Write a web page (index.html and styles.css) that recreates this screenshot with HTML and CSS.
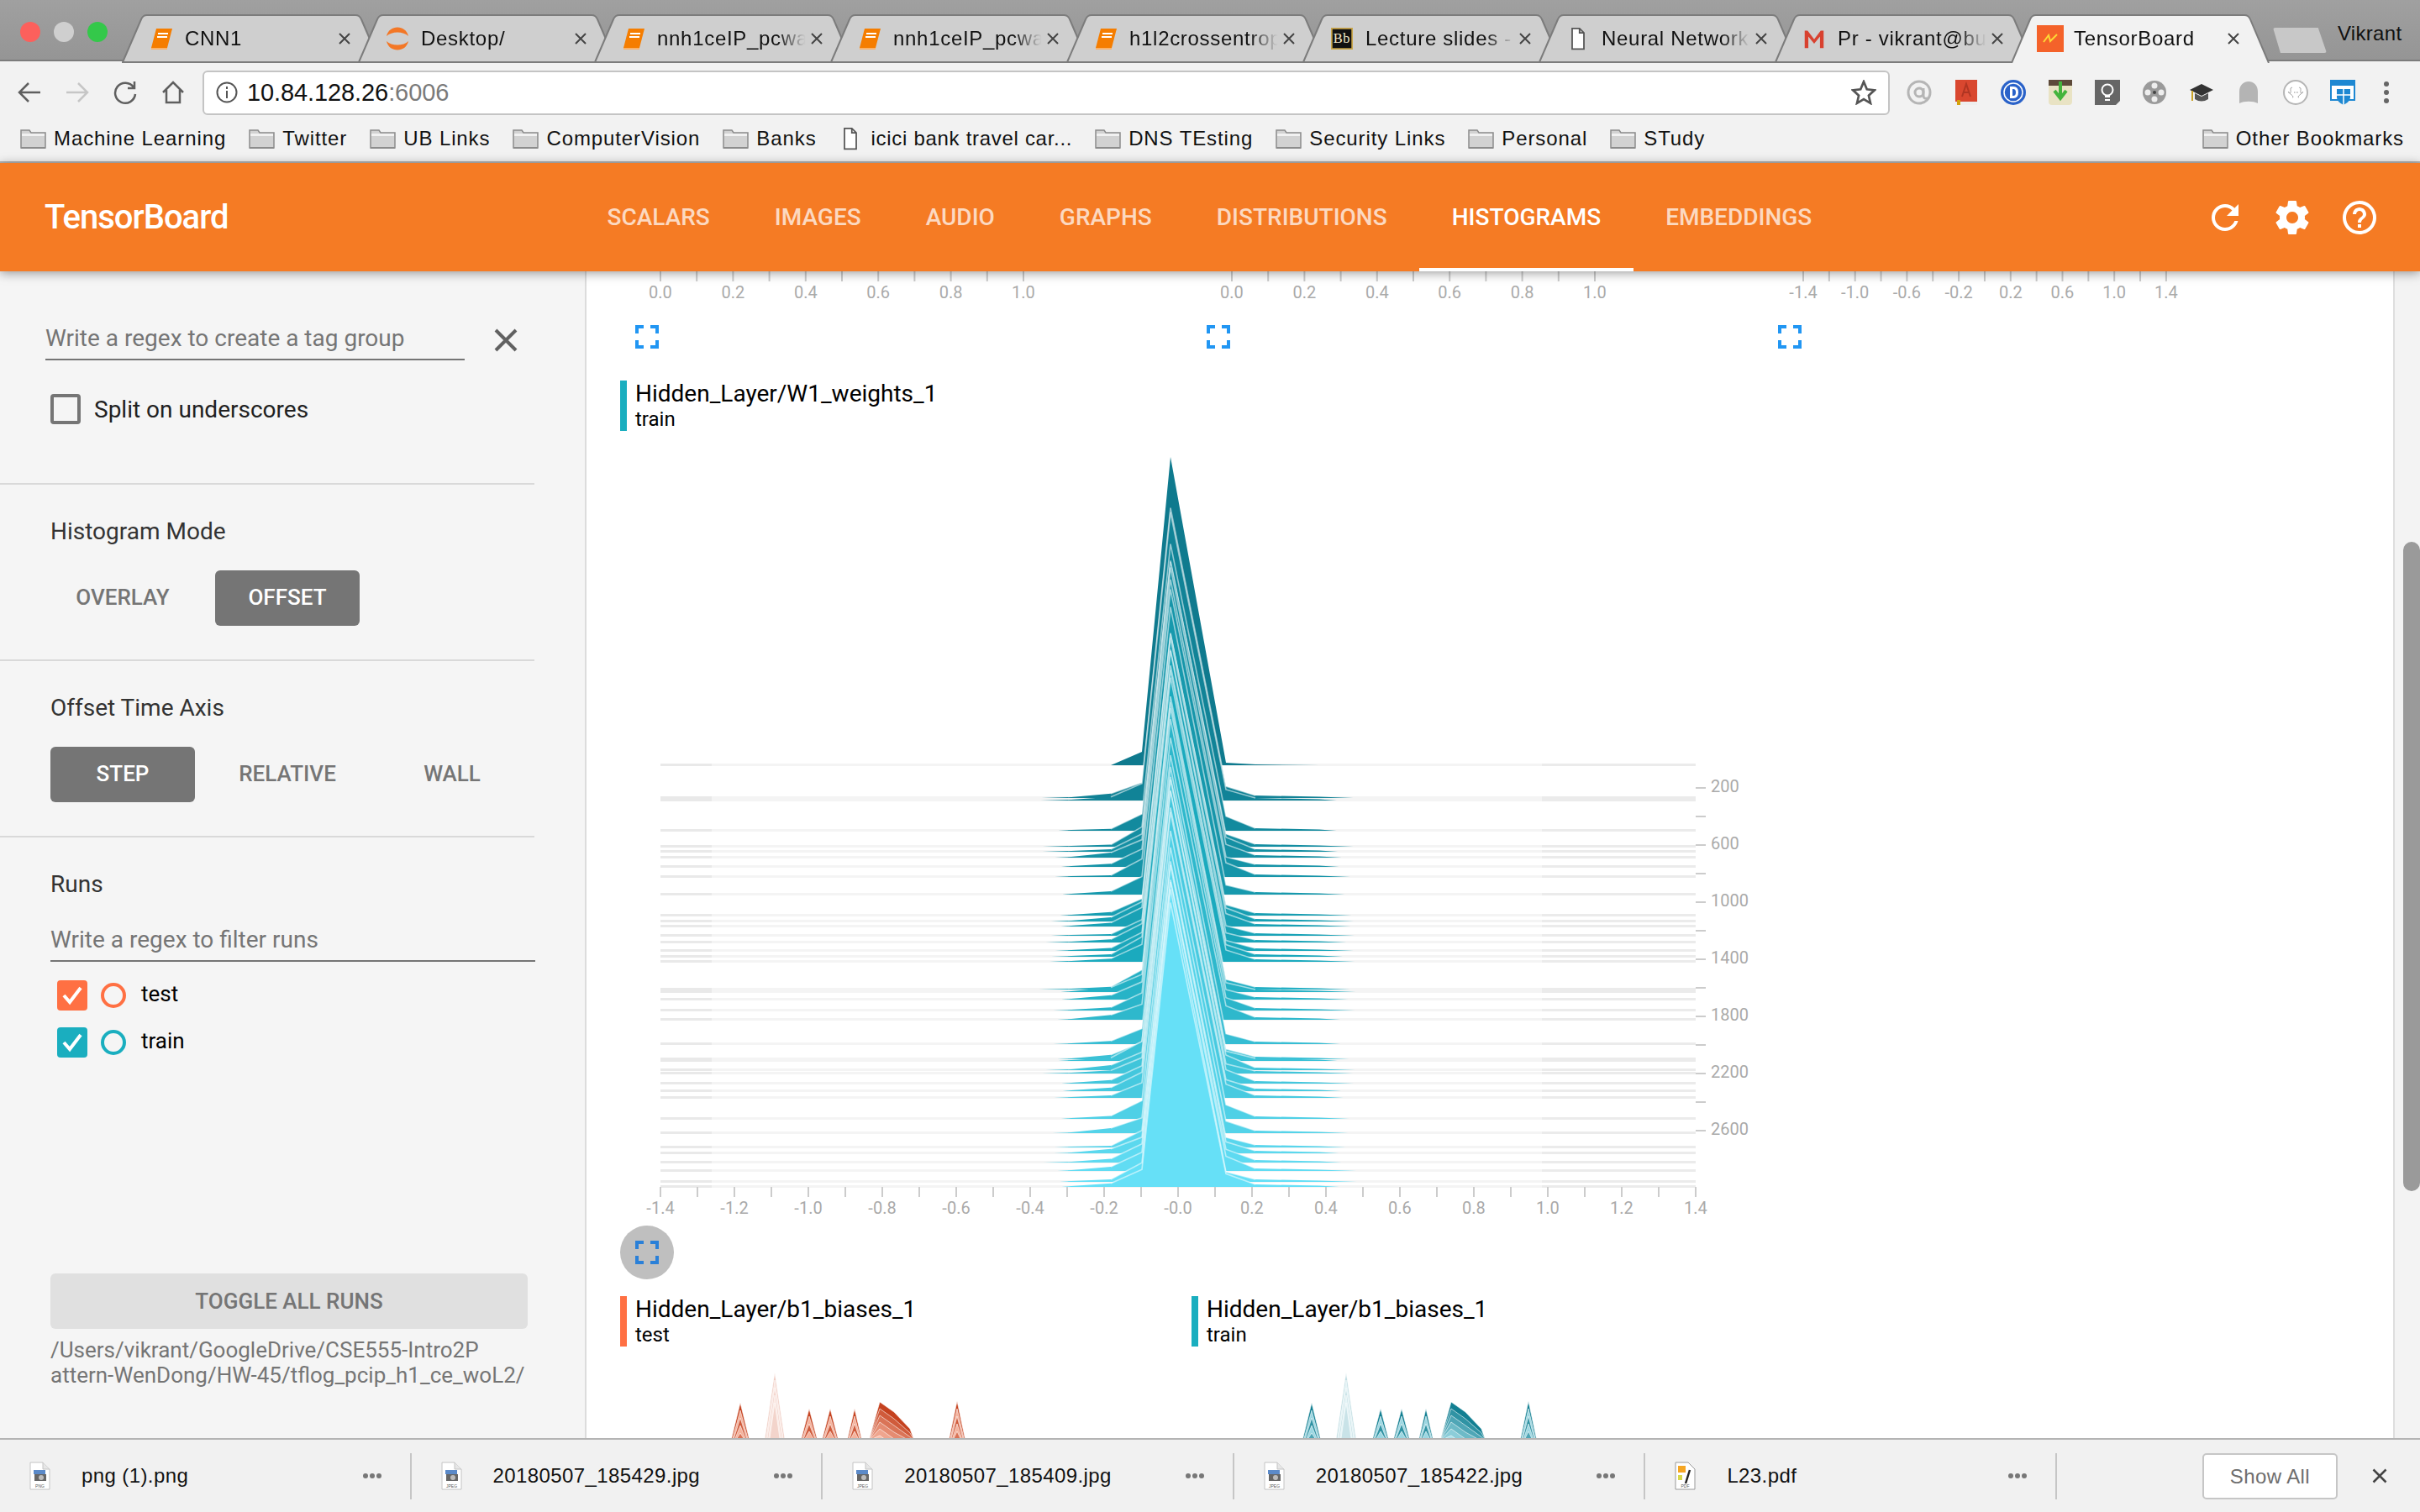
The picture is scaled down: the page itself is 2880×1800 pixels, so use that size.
FILE: index.html
```html
<!DOCTYPE html>
<html lang="en">

<head>
    <meta charset="UTF-8">
    <title>TensorBoard</title>
    <link rel="stylesheet" href="styles.css">
</head>

<body>
    <!-- shared icons -->
    <svg class="defs" width="0" height="0">
        <symbol id="tab-closed" viewBox="0 0 308 58" preserveAspectRatio="none">
            <path d="M1 57L23 6Q25 1 30 1H278Q283 1 285 6L307 57Z" />
        </symbol>
        <symbol id="folder" viewBox="0 0 31 24">
            <path d="M1 23V2H11L13 5H30V23Z" fill="#d2d2d2" stroke="#8c8c8c" stroke-width="1.5" />
            <path d="M2 6H29V9H2Z" fill="#f1f1f1" />
            <path d="M1 22H30V24H1Z" fill="#8c8c8c" />
        </symbol>
        <symbol id="page" viewBox="0 0 20 32">
            <path d="M2 2H12L18 8V30H2ZM12 2V8H18" fill="#fff" stroke="#555" stroke-width="2" />
        </symbol>
        <symbol id="book" viewBox="0 0 26 26">
            <path d="M7 1H26L20 24H1Z" fill="#f57d00" />
            <path d="M1 24H20V26H1Z" fill="#f9b26b" />
            <path d="M9 7H21M8 11H20" stroke="#fff" stroke-width="2" />
        </symbol>
        <symbol id="close-x" viewBox="0 0 16 16">
            <path d="M2 2L14 14M14 2L2 14" stroke="#444" stroke-width="2" fill="none" />
        </symbol>
        <symbol id="expand" viewBox="0 0 28 28">
            <path d="M2 10V2H10M18 2H26V10M26 18V26H18M10 26H2V18" fill="none" stroke="currentColor" stroke-width="4" />
        </symbol>
        <symbol id="doc" viewBox="0 0 25 34">
            <path d="M1 1H16L24 9V33H1Z" fill="#fff" stroke="#c4c4c4" />
            <path d="M16 1V9H24" fill="#e6e6e6" stroke="#c4c4c4" />
            <path d="M5 10H19V15H5Z" fill="#5b8ac9" />
            <path d="M6 15H20V23H6Z" fill="#666" />
            <circle cx="14" cy="19" r="3" fill="#bbb" />
        </symbol>
        <symbol id="check" viewBox="0 0 36 36">
            <path d="M8 18L15 26L28 9" fill="none" stroke="#fff" stroke-width="4" />
        </symbol>
    </svg>

    <header class="tabstrip">
        <div class="lights">
            <span class="light light-red"></span>
            <span class="light light-off"></span>
            <span class="light light-green"></span>
        </div>
        <div class="tabs">
            <div class="tab">
                <svg class="tab-shape"><use href="#tab-closed" /></svg>
                <svg class="favicon"><use href="#book" /></svg>
                <span class="tab-title">CNN1</span>
                <svg class="tab-x"><use href="#close-x" /></svg>
            </div>
            <div class="tab">
                <svg class="tab-shape"><use href="#tab-closed" /></svg>
                <svg class="favicon favicon-wide" viewBox="0 0 30 30">
                    <path d="M2 12C5 -2 25 -2 28 12C22 6 8 6 2 12Z" fill="#f37726" />
                    <path d="M2 18C5 32 25 32 28 18C22 24 8 24 2 18Z" fill="#f37726" />
                </svg>
                <span class="tab-title">Desktop/</span>
                <svg class="tab-x"><use href="#close-x" /></svg>
            </div>
            <div class="tab">
                <svg class="tab-shape"><use href="#tab-closed" /></svg>
                <svg class="favicon"><use href="#book" /></svg>
                <span class="tab-title">nnh1ceIP_pcwa</span>
                <svg class="tab-x"><use href="#close-x" /></svg>
            </div>
            <div class="tab">
                <svg class="tab-shape"><use href="#tab-closed" /></svg>
                <svg class="favicon"><use href="#book" /></svg>
                <span class="tab-title">nnh1ceIP_pcwa</span>
                <svg class="tab-x"><use href="#close-x" /></svg>
            </div>
            <div class="tab">
                <svg class="tab-shape"><use href="#tab-closed" /></svg>
                <svg class="favicon"><use href="#book" /></svg>
                <span class="tab-title">h1l2crossentrop</span>
                <svg class="tab-x"><use href="#close-x" /></svg>
            </div>
            <div class="tab">
                <svg class="tab-shape"><use href="#tab-closed" /></svg>
                <svg class="favicon" viewBox="0 0 30 30">
                    <rect x="1" y="1" width="28" height="28" fill="#111" stroke="#c9a64a" stroke-width="2" />
                    <text x="15" y="21" class="bb-text">Bb</text>
                </svg>
                <span class="tab-title">Lecture slides -</span>
                <svg class="tab-x"><use href="#close-x" /></svg>
            </div>
            <div class="tab">
                <svg class="tab-shape"><use href="#tab-closed" /></svg>
                <svg class="favicon"><use href="#page" /></svg>
                <span class="tab-title">Neural Network</span>
                <svg class="tab-x"><use href="#close-x" /></svg>
            </div>
            <div class="tab">
                <svg class="tab-shape"><use href="#tab-closed" /></svg>
                <svg class="favicon" viewBox="0 0 30 30">
                    <path d="M2 4H6L15 16L24 4H28V28H23V12L15 22L7 12V28H2Z" fill="#d8412f" />
                </svg>
                <span class="tab-title">Pr - vikrant@bu</span>
                <svg class="tab-x"><use href="#close-x" /></svg>
            </div>
            <div class="tab tab-active">
                <svg class="tab-shape" viewBox="0 0 308 58" preserveAspectRatio="none">
                    <path d="M1 58L23 6Q25 1 30 1H278Q283 1 285 6L307 58" />
                </svg>
                <svg class="favicon favicon-tb" viewBox="0 0 32 32">
                    <rect width="32" height="32" fill="#f4622a" />
                    <path d="M8 20L14 12L16 19L24 11" fill="none" stroke="#fdd835" stroke-width="2" />
                </svg>
                <span class="tab-title">TensorBoard</span>
                <svg class="tab-x"><use href="#close-x" /></svg>
            </div>
        </div>
        <div class="new-tab"></div>
        <span class="profile">Vikrant</span>
    </header>

    <div class="toolbar">
        <div class="nav-row">
            <svg class="nav-btn" viewBox="0 0 30 30"><path d="M28 15H4M14 4L3 15L14 26" /></svg>
            <svg class="nav-btn nav-off" viewBox="0 0 30 30"><path d="M2 15H26M16 4L27 15L16 26" /></svg>
            <svg class="nav-btn" viewBox="0 0 30 30"><path d="M25 9A12 12 0 1 0 27 17M26 2V10H18" /></svg>
            <svg class="nav-btn" viewBox="0 0 30 30"><path d="M3 15L15 3L27 15M7 12V27H23V12" /></svg>
            <div class="omnibox">
                <svg class="omni-info" viewBox="0 0 26 26">
                    <circle cx="13" cy="13" r="11.5" />
                    <path d="M13 11V20M13 6V9" />
                </svg>
                <span class="omni-host">10.84.128.26</span><span class="omni-port">:6006</span>
                <svg class="omni-star" viewBox="0 0 28 28"><path d="M14 2L17.5 10.5L26 11.5L19.5 17.5L21.5 26L14 21.5L6.5 26L8.5 17.5L2 11.5L10.5 10.5Z" /></svg>
            </div>
            <div class="extensions">
                <svg class="ext" viewBox="0 0 30 30">
                    <circle cx="15" cy="15" r="13" fill="none" stroke="#b5b5b5" stroke-width="3" />
                    <circle cx="15" cy="15" r="5" fill="none" stroke="#b5b5b5" stroke-width="3" />
                    <path d="M20 10V19Q20 23 25 22" fill="none" stroke="#b5b5b5" stroke-width="3" />
                </svg>
                <svg class="ext" viewBox="0 0 30 30">
                    <rect x="2" y="0" width="26" height="26" fill="#d9472f" />
                    <rect x="2" y="26" width="26" height="4" fill="#eee" />
                    <path d="M10 20L15 5L20 20M12 15H18" fill="none" stroke="#b03522" stroke-width="2" />
                    <rect x="4" y="24" width="4" height="6" fill="#d4a20c" />
                </svg>
                <svg class="ext" viewBox="0 0 30 30">
                    <circle cx="15" cy="15" r="15" fill="#2a62c9" />
                    <circle cx="15" cy="15" r="11" fill="none" stroke="#fff" stroke-width="1.5" />
                    <path d="M11 8H15Q21 8 21 15T15 22H11Z" fill="#fff" />
                    <path d="M14 11H15Q18 11 18 15T15 19H14Z" fill="#2a62c9" />
                </svg>
                <svg class="ext" viewBox="0 0 30 30">
                    <rect x="1" y="0" width="28" height="30" rx="4" fill="#e9e3c4" />
                    <rect x="1" y="0" width="28" height="7" fill="#5d4a3a" />
                    <path d="M15 2V20M8 13L15 22L22 13" fill="none" stroke="#44b43c" stroke-width="4" />
                </svg>
                <svg class="ext" viewBox="0 0 30 30">
                    <path d="M0 0H30V25L25 30H0Z" fill="#666" />
                    <circle cx="15" cy="12" r="6.5" fill="none" stroke="#fff" stroke-width="2" />
                    <path d="M12 20H18M12 24H18" stroke="#fff" stroke-width="2" />
                </svg>
                <svg class="ext" viewBox="0 0 30 30">
                    <circle cx="15" cy="15" r="14" fill="#9a9a9a" />
                    <circle cx="15" cy="7" r="3.5" fill="#eee" />
                    <circle cx="15" cy="23" r="3.5" fill="#eee" />
                    <circle cx="7" cy="15" r="3.5" fill="#eee" />
                    <circle cx="23" cy="15" r="3.5" fill="#eee" />
                    <circle cx="15" cy="15" r="2" fill="#444" />
                </svg>
                <svg class="ext" viewBox="0 0 30 30">
                    <path d="M15 5L29 12L15 19L1 12Z" fill="#333" />
                    <path d="M7 16V23Q15 28 23 23V16L15 20Z" fill="#555" />
                    <path d="M4 13V25" stroke="#c9a227" stroke-width="2" />
                </svg>
                <svg class="ext" viewBox="0 0 30 30">
                    <path d="M4 28V14C4 -2 26 -2 26 14V28C20 25 10 25 4 28Z" fill="#b4b4b4" />
                </svg>
                <svg class="ext" viewBox="0 0 30 30">
                    <circle cx="15" cy="15" r="14" fill="#fff" stroke="#b5b5b5" stroke-width="2" />
                    <path d="M11 9Q8 9 9 13T7 15T9 17T11 21M19 9Q22 9 21 13T23 15T21 17T19 21" fill="none" stroke="#aaa" />
                    <path d="M13 15H14M15 15H16M17 15H18" stroke="#888" />
                </svg>
                <svg class="ext" viewBox="0 0 30 30">
                    <path d="M1 1H29V24H1Z" fill="#fff" stroke="#1e88d2" stroke-width="2" />
                    <rect x="1" y="1" width="28" height="6" fill="#1e88d2" />
                    <path d="M8 11H24V21Q24 26 16 30Q8 26 8 21Z" fill="#1e88d2" />
                    <path d="M16 11V30M8 18H24" stroke="#fff" stroke-width="1.5" />
                </svg>
                <svg class="ext ext-menu" viewBox="0 0 8 30">
                    <circle cx="4" cy="5" r="3" />
                    <circle cx="4" cy="15" r="3" />
                    <circle cx="4" cy="25" r="3" />
                </svg>
            </div>
        </div>

        <nav class="bookmarks">
            <a class="bookmark"><svg class="bm-icon"><use href="#folder" /></svg>Machine Learning</a>
            <a class="bookmark"><svg class="bm-icon"><use href="#folder" /></svg>Twitter</a>
            <a class="bookmark"><svg class="bm-icon"><use href="#folder" /></svg>UB Links</a>
            <a class="bookmark"><svg class="bm-icon"><use href="#folder" /></svg>ComputerVision</a>
            <a class="bookmark"><svg class="bm-icon"><use href="#folder" /></svg>Banks</a>
            <a class="bookmark bookmark-page"><svg class="bm-page"><use href="#page" /></svg>icici bank travel car...</a>
            <a class="bookmark"><svg class="bm-icon"><use href="#folder" /></svg>DNS TEsting</a>
            <a class="bookmark"><svg class="bm-icon"><use href="#folder" /></svg>Security Links</a>
            <a class="bookmark"><svg class="bm-icon"><use href="#folder" /></svg>Personal</a>
            <a class="bookmark"><svg class="bm-icon"><use href="#folder" /></svg>STudy</a>
            <a class="bookmark bookmark-other"><svg class="bm-icon"><use href="#folder" /></svg>Other Bookmarks</a>
        </nav>
    </div>

    <div class="tb-header">
        <div class="tb-brand">TensorBoard</div>
        <nav class="tb-tabs">
            <a class="tb-tab">Scalars</a>
            <a class="tb-tab">Images</a>
            <a class="tb-tab">Audio</a>
            <a class="tb-tab">Graphs</a>
            <a class="tb-tab">Distributions</a>
            <a class="tb-tab tb-tab-active">Histograms</a>
            <a class="tb-tab">Embeddings</a>
        </nav>
        <div class="tb-actions">
            <svg class="tb-icon" viewBox="0 0 24 24"><path d="M17.65 6.35C16.2 4.9 14.21 4 12 4c-4.42 0-7.99 3.58-7.99 8s3.57 8 7.99 8c3.73 0 6.84-2.55 7.73-6h-2.08c-.82 2.33-3.04 4-5.65 4-3.31 0-6-2.69-6-6s2.69-6 6-6c1.66 0 3.14.69 4.22 1.78L13 11h7V4l-2.35 2.35z" /></svg>
            <svg class="tb-icon" viewBox="0 0 24 24"><path d="M19.43 12.98c.04-.32.07-.64.07-.98s-.03-.66-.07-.98l2.11-1.65c.19-.15.24-.42.12-.64l-2-3.46c-.12-.22-.39-.3-.61-.22l-2.49 1c-.52-.4-1.08-.73-1.69-.98l-.38-2.65C14.46 2.18 14.25 2 14 2h-4c-.25 0-.46.18-.49.42l-.38 2.65c-.61.25-1.17.59-1.69.98l-2.49-1c-.23-.09-.49 0-.61.22l-2 3.46c-.13.22-.07.49.12.64l2.11 1.65c-.04.32-.07.65-.07.98s.03.66.07.98l-2.11 1.65c-.19.15-.24.42-.12.64l2 3.46c.12.22.39.3.61.22l2.49-1c.52.4 1.08.73 1.69.98l.38 2.65c.03.24.24.42.49.42h4c.25 0 .46-.18.49-.42l.38-2.65c.61-.25 1.17-.59 1.69-.98l2.49 1c.23.09.49 0 .61-.22l2-3.46c.12-.22.07-.49-.12-.64l-2.11-1.65zM12 15.5c-1.93 0-3.5-1.57-3.5-3.5s1.57-3.5 3.5-3.5 3.5 1.57 3.5 3.5-1.57 3.5-3.5 3.5z" /></svg>
            <svg class="tb-icon" viewBox="0 0 24 24"><path d="M11 18h2v-2h-2v2zm1-16C6.48 2 2 6.48 2 12s4.48 10 10 10 10-4.48 10-10S17.52 2 12 2zm0 18c-4.41 0-8-3.59-8-8s3.59-8 8-8 8 3.59 8 8-3.59 8-8 8zm0-14c-2.21 0-4 1.79-4 4h2c0-1.1.9-2 2-2s2 .9 2 2c0 2-3 1.75-3 5h2c0-2.25 3-2.5 3-5 0-2.21-1.79-4-4-4z" /></svg>
        </div>
    </div>

    <div class="content">
        <aside class="sidebar">
            <section class="side-section side-tags">
                <div class="tag-row">
                    <div class="side-input side-input-tag">Write a regex to create a tag group</div>
                    <svg class="tag-clear" viewBox="0 0 28 28"><path d="M2 2L26 26M26 2L2 26" /></svg>
                </div>
                <label class="split-row"><span class="split-box"></span>Split on underscores</label>
            </section>
            <section class="side-section">
                <h3 class="side-title">Histogram Mode</h3>
                <div class="seg">
                    <span class="seg-btn">Overlay</span>
                    <span class="seg-btn seg-btn-on">Offset</span>
                </div>
            </section>
            <section class="side-section">
                <h3 class="side-title">Offset Time Axis</h3>
                <div class="seg">
                    <span class="seg-btn seg-btn-on">Step</span>
                    <span class="seg-btn">Relative</span>
                    <span class="seg-btn">Wall</span>
                </div>
            </section>
            <section class="side-section side-runs">
                <h3 class="side-title">Runs</h3>
                <div class="side-input side-input-runs">Write a regex to filter runs</div>
                <div class="run-row run-test">
                    <span class="run-check"><svg><use href="#check" /></svg></span>
                    <span class="run-dot"></span>
                    <span class="run-name">test</span>
                </div>
                <div class="run-row run-train">
                    <span class="run-check"><svg><use href="#check" /></svg></span>
                    <span class="run-dot"></span>
                    <span class="run-name">train</span>
                </div>
            </section>
            <div class="side-foot">
                <div class="toggle-btn">Toggle all runs</div>
                <p class="logdir">/Users/vikrant/GoogleDrive/CSE555-Intro2P<br>attern-WenDong/HW-45/tflog_pcip_h1_ce_woL2/</p>
            </div>
        </aside>

        <main class="cards">
            <div class="card">
                <svg class="axis-top" id="axis-1" viewBox="0 0 680 46"></svg>
                <div class="expand-btn"><svg class="expand-icon"><use href="#expand" /></svg></div>
            </div>
            <div class="card">
                <svg class="axis-top" id="axis-2" viewBox="0 0 680 46"></svg>
                <div class="expand-btn"><svg class="expand-icon"><use href="#expand" /></svg></div>
            </div>
            <div class="card">
                <svg class="axis-top" id="axis-3" viewBox="0 0 680 46"></svg>
                <div class="expand-btn"><svg class="expand-icon"><use href="#expand" /></svg></div>
            </div>

            <div class="card card-wide">
                <div class="card-head head-train">
                    <div class="card-tag">Hidden_Layer/W1_weights_1</div>
                    <div class="card-run">train</div>
                </div>
                <svg class="hist-big" id="hist-big" viewBox="738 512 1360 946"></svg>
                <div class="expand-btn expand-btn-hover"><svg class="expand-icon"><use href="#expand" /></svg></div>
            </div>
            <div class="card-spacer"></div>

            <div class="card">
                <div class="card-head head-test">
                    <div class="card-tag">Hidden_Layer/b1_biases_1</div>
                    <div class="card-run">test</div>
                </div>
                <svg class="hist-small" id="hist-test" viewBox="738 1602 680 110"></svg>
            </div>
            <div class="card">
                <div class="card-head head-train">
                    <div class="card-tag">Hidden_Layer/b1_biases_1</div>
                    <div class="card-run">train</div>
                </div>
                <svg class="hist-small" id="hist-train" viewBox="738 1602 680 110"></svg>
            </div>
        </main>

        <div class="scrollbar"><div class="scroll-thumb"></div></div>
    </div>

    <footer class="shelf">
        <div class="dl-item">
            <svg class="dl-icon" viewBox="0 0 25 34"><use href="#doc" /><text x="12.5" y="31" class="dl-type">PNG</text></svg>
            <span class="dl-name">png (1).png</span>
            <span class="dl-more"><i></i><i></i><i></i></span>
        </div>
        <div class="dl-item">
            <svg class="dl-icon" viewBox="0 0 25 34"><use href="#doc" /><text x="12.5" y="31" class="dl-type">JPEG</text></svg>
            <span class="dl-name">20180507_185429.jpg</span>
            <span class="dl-more"><i></i><i></i><i></i></span>
        </div>
        <div class="dl-item">
            <svg class="dl-icon" viewBox="0 0 25 34"><use href="#doc" /><text x="12.5" y="31" class="dl-type">JPEG</text></svg>
            <span class="dl-name">20180507_185409.jpg</span>
            <span class="dl-more"><i></i><i></i><i></i></span>
        </div>
        <div class="dl-item">
            <svg class="dl-icon" viewBox="0 0 25 34"><use href="#doc" /><text x="12.5" y="31" class="dl-type">JPEG</text></svg>
            <span class="dl-name">20180507_185422.jpg</span>
            <span class="dl-more"><i></i><i></i><i></i></span>
        </div>
        <div class="dl-item">
            <svg class="dl-icon" viewBox="0 0 25 34">
                <path d="M1 1H16L24 9V33H1Z" fill="#fff" stroke="#999" />
                <path d="M4 5H13V13H4Z" fill="#f5a623" />
                <path d="M4 16H9V22H4Z" fill="#d8d84a" />
                <path d="M18 10L13 26" stroke="#222" stroke-width="2.5" />
                <text x="12.5" y="31" class="dl-type">PDF</text>
            </svg>
            <span class="dl-name">L23.pdf</span>
            <span class="dl-more"><i></i><i></i><i></i></span>
        </div>
        <div class="shelf-show">Show All</div>
        <svg class="shelf-x"><use href="#close-x" /></svg>
    </footer>

    <script src="script.js"></script>
</body>

</html>
```

FILE: styles.css
```css
* {
    box-sizing: border-box;
}

html,
body {
    margin: 0;
    height: 1800px;
    overflow: hidden;
}

body {
    display: flex;
    flex-direction: column;
    width: 2880px;
    font-family: "Roboto", "Liberation Sans", sans-serif;
    background-color: #fff;
}

.defs {
    position: absolute;
}

/* browser tab strip */
.tabstrip {
    display: flex;
    flex: none;
    height: 73px;
    background: linear-gradient(#a0a0a0, #959595);
    border-bottom: 2px solid #7c7c7c;
    font-family: "Liberation Sans", sans-serif;
}

.lights {
    display: flex;
    gap: 16px;
    width: 145px;
    padding: 26px 0 0 24px;
}

.light {
    width: 24px;
    height: 24px;
    border-radius: 50%;
}

.light-red {
    background-color: #fc605c;
}

.light-off {
    background-color: #cfcfcf;
}

.light-green {
    background-color: #34c84a;
}

.tabs {
    display: flex;
    align-items: flex-end;
}

.tab {
    position: relative;
    display: flex;
    align-items: center;
    width: 308px;
    height: 56px;
    margin-right: -27px;
    margin-bottom: -2px;
    padding: 2px 0 0 34px;
    font-size: 24px;
    letter-spacing: 0.7px;
    color: #111;
}

.tab-shape {
    position: absolute;
    top: 0;
    left: 0;
    width: 308px;
    height: 58px;
    fill: #cfcfcf;
    stroke: #7c7c7c;
    stroke-width: 2px;
}

.tab-active {
    z-index: 2;
}

.tab-active .tab-shape {
    fill: #f2f2f2;
}

.favicon {
    position: relative;
    flex: none;
    width: 26px;
    height: 28px;
}

.favicon-wide {
    width: 30px;
    height: 30px;
    margin: 0 -2px;
}

.favicon-tb {
    width: 32px;
    height: 32px;
    margin: 0 -3px;
}

.bb-text {
    font-family: "Liberation Serif", serif;
    font-size: 19px;
    fill: #f0e6c8;
    text-anchor: middle;
}

.tab-title {
    position: relative;
    width: 184px;
    margin-left: 15px;
    overflow: hidden;
    white-space: nowrap;
    -webkit-mask-image: linear-gradient(to right, #000 78%, transparent 96%);
    mask-image: linear-gradient(to right, #000 78%, transparent 96%);
}

.tab-x {
    position: relative;
    width: 16px;
    height: 16px;
    margin-left: -2px;
}

.new-tab {
    width: 64px;
    height: 30px;
    margin: 33px 0 0 31px;
    background-color: #c8c8c8;
    clip-path: polygon(0 0, 84% 0, 100% 100%, 14% 100%);
    border-radius: 3px;
}

.profile {
    margin: 26px 0 0 13px;
    font-size: 24px;
    line-height: 28px;
    letter-spacing: 0.3px;
    color: #111;
}

/* address bar + bookmarks */
.toolbar {
    flex: none;
    height: 121px;
    background-color: #f2f2f2;
    border-bottom: 2px solid #b4b4b4;
    font-family: "Liberation Sans", sans-serif;
}

.nav-row {
    display: flex;
    align-items: center;
    height: 64px;
    padding: 10px 0 0 20px;
}

.nav-btn {
    flex: none;
    width: 30px;
    height: 30px;
    margin-right: 27px;
    fill: none;
    stroke: #5f5f5f;
    stroke-width: 2.5;
}

.nav-off {
    stroke: #c6c6c6;
}

.omnibox {
    display: flex;
    align-items: center;
    width: 2008px;
    height: 53px;
    margin-left: -7px;
    padding: 0 14px;
    background-color: #fff;
    border: 2px solid #c4c4c4;
    border-radius: 6px;
    font-size: 29px;
    letter-spacing: -0.1px;
}

.omni-info {
    width: 26px;
    height: 26px;
    margin-right: 11px;
    fill: none;
    stroke: #555;
    stroke-width: 2;
}

.omni-host {
    color: #111;
}

.omni-port {
    color: #7a7a7a;
}

.omni-star {
    width: 30px;
    height: 30px;
    margin-left: auto;
    fill: none;
    stroke: #555;
    stroke-width: 2.5;
}

.extensions {
    display: flex;
    align-items: center;
    gap: 26px;
    margin-left: 20px;
}

.ext {
    flex: none;
    width: 30px;
    height: 30px;
}

.ext-menu {
    width: 8px;
    margin-left: 7px;
    fill: #666;
}

.bookmarks {
    display: flex;
    align-items: center;
    gap: 27px;
    height: 55px;
    padding: 0 19px 0 24px;
    font-size: 24px;
    letter-spacing: 0.9px;
    color: #111;
}

.bookmark {
    display: flex;
    align-items: center;
    gap: 9px;
}

.bookmark-page {
    letter-spacing: 0.7px;
}

.bookmark-other {
    margin-left: auto;
}

.bm-icon {
    width: 31px;
    height: 24px;
}

.bm-page {
    width: 20px;
    height: 28px;
    margin: 0 6px 0 3px;
}

/* tensorboard header */
.tb-header {
    position: relative;
    z-index: 3;
    display: flex;
    align-items: stretch;
    flex: none;
    height: 129px;
    padding: 0 48px 0 53px;
    background-color: #f57b24;
    color: #fff;
    box-shadow: 0 2px 12px rgba(0, 0, 0, 0.4);
}

.tb-brand {
    width: 631px;
    font-size: 40px;
    font-weight: 500;
    line-height: 129px;
    letter-spacing: -1px;
}

.tb-tabs {
    display: flex;
}

.tb-tab {
    padding: 0 38.5px;
    font-size: 28px;
    font-weight: 500;
    line-height: 129px;
    text-transform: uppercase;
    color: rgba(255, 255, 255, 0.72);
}

.tb-tab-active {
    color: #fff;
    border-bottom: 4px solid #fff;
}

.tb-actions {
    display: flex;
    align-items: center;
    gap: 32px;
    margin-left: auto;
}

.tb-icon {
    width: 48px;
    height: 48px;
    fill: #fff;
}

/* layout under the header */
.content {
    display: flex;
    flex: 1;
    min-height: 0;
}

.sidebar {
    display: flex;
    flex-direction: column;
    flex: none;
    width: 698px;
    background-color: #f5f5f5;
    border-right: 2px solid #dcdcdc;
}

.side-section {
    width: 636px;
    height: 210px;
    padding: 36px 0 0 60px;
    border-bottom: 2px solid #d9d9d9;
}

.side-tags {
    height: 254px;
    padding: 62px 0 0 54px;
}

.side-runs {
    height: auto;
    border-bottom: none;
}

.tag-row {
    display: flex;
}

.side-input {
    height: 44px;
    font-size: 28px;
    line-height: 36px;
    color: #757575;
    border-bottom: 2px solid #757575;
}

.side-input-tag {
    width: 499px;
}

.tag-clear {
    width: 28px;
    height: 28px;
    margin: 6px 0 0 35px;
    fill: none;
    stroke: #616161;
    stroke-width: 4;
}

.split-row {
    display: flex;
    align-items: center;
    gap: 16px;
    margin: 40px 0 0 6px;
    font-size: 28px;
    color: #212121;
}

.split-box {
    width: 36px;
    height: 36px;
    border: 4px solid #757575;
    border-radius: 4px;
}

.side-title {
    margin: 0;
    font-size: 28px;
    font-weight: 400;
    line-height: 40px;
    color: #333;
}

.seg {
    display: flex;
    gap: 24px;
    margin-top: 26px;
}

.seg-btn {
    width: 172px;
    height: 66px;
    font-size: 26px;
    font-weight: 500;
    line-height: 65px;
    text-align: center;
    text-transform: uppercase;
    color: #757575;
    border-radius: 6px;
}

.seg-btn-on {
    background-color: #757575;
    color: #fff;
}

.side-input-runs {
    width: 577px;
    margin-top: 26px;
    height: 46px;
    line-height: 40px;
}

.run-row {
    display: flex;
    align-items: center;
    height: 36px;
    margin: 22px 0 0 8px;
    font-size: 26px;
    color: #000;
}

.run-row + .run-row {
    margin-top: 20px;
}

.run-check {
    width: 36px;
    height: 36px;
    border-radius: 4px;
}

.run-check svg {
    display: block;
    width: 36px;
    height: 36px;
}

.run-dot {
    width: 30px;
    height: 30px;
    margin: 0 18px 0 16px;
    border: 4px solid;
    border-radius: 50%;
}

.run-name {
    margin-bottom: 5px;
}

.run-test .run-check {
    background-color: #ff7043;
}

.run-test .run-dot {
    border-color: #ff7043;
}

.run-train .run-check {
    background-color: #1aaebf;
}

.run-train .run-dot {
    border-color: #1aaebf;
}

.side-foot {
    margin-top: auto;
    padding: 0 0 60px 60px;
}

.toggle-btn {
    width: 568px;
    height: 66px;
    background-color: #e0e0e0;
    border-radius: 6px;
    font-size: 26px;
    font-weight: 500;
    line-height: 66px;
    text-align: center;
    text-transform: uppercase;
    color: #757575;
}

.logdir {
    margin: 10px 0 0;
    font-size: 26px;
    line-height: 30px;
    color: #757575;
    white-space: nowrap;
}

/* chart cards */
.cards {
    display: grid;
    flex: 1;
    grid-template-columns: repeat(3, 680px);
    grid-auto-rows: min-content;
    align-content: start;
    padding-left: 40px;
    overflow: hidden;
    min-width: 0;
}

.card-wide {
    grid-column: span 2;
}

.axis-top {
    display: block;
    width: 680px;
    height: 46px;
}

.axis-line {
    stroke: #ccc;
    stroke-width: 2;
}

.axis-label {
    font-family: "Roboto", sans-serif;
    font-size: 20px;
    fill: #aaa;
    text-anchor: middle;
    dominant-baseline: central;
}

.axis-label-y {
    text-anchor: start;
}

.expand-btn {
    display: flex;
    align-items: center;
    justify-content: center;
    width: 64px;
    height: 64px;
    color: #2196f3;
    border-radius: 50%;
}

.expand-btn-hover {
    background-color: #bfbfbf;
    color: #2a80d8;
}

.expand-icon {
    width: 28px;
    height: 28px;
}

.card-head {
    height: 60px;
    margin-top: 20px;
    padding-left: 10px;
    border-left: 8px solid;
    color: #000;
}

.head-train {
    border-color: #1aaebf;
}

.head-test {
    border-color: #ff7043;
}

.card-tag {
    font-size: 28px;
    line-height: 32px;
}

.card-run {
    font-size: 24px;
    line-height: 28px;
}

.hist-big {
    display: block;
    width: 1360px;
    height: 946px;
}

.hist-small {
    display: block;
    width: 680px;
    height: 110px;
}

.scrollbar {
    flex: none;
    width: 32px;
    background-color: #f3f3f3;
    border-left: 2px solid #dedede;
    overflow: hidden;
}

.scroll-thumb {
    width: 20px;
    height: 773px;
    margin: 322px 0 0 10px;
    background-color: #9a9a9a;
    border-radius: 10px;
}

/* download shelf */
.shelf {
    display: flex;
    align-items: center;
    flex: none;
    height: 88px;
    background-color: #f1f1f1;
    border-top: 2px solid #b4b4b4;
    font-family: "Liberation Sans", sans-serif;
}

.dl-item {
    display: flex;
    align-items: center;
    width: 489.6px;
    height: 55px;
    padding: 0 34px 0 35px;
    border-right: 2px solid #c6c6c6;
}

.dl-icon {
    flex: none;
    width: 25px;
    height: 34px;
}

.dl-type {
    font-size: 5px;
    letter-spacing: 0;
    fill: #555;
    text-anchor: middle;
}

.dl-name {
    flex: 1;
    margin-left: 37px;
    font-size: 24px;
    letter-spacing: 0.4px;
    color: #111;
}

.dl-more {
    display: flex;
    gap: 2px;
}

.dl-more i {
    width: 6px;
    height: 6px;
    border-radius: 50%;
    background-color: #777;
}

.shelf-show {
    width: 161px;
    height: 55px;
    margin-left: 173px;
    background-color: #fff;
    border: 2px solid #c6c6c6;
    border-radius: 5px;
    font-size: 24px;
    line-height: 51px;
    letter-spacing: 0.4px;
    text-align: center;
    color: #6e6e6e;
}

.shelf-x {
    width: 20px;
    height: 20px;
    margin-left: 40px;
}
```

FILE: script.js
```js
// Histogram + axis drawing. Coordinates below are page pixels, the svg viewBoxes line up with them.
const NS = "http://www.w3.org/2000/svg";

// step baselines, top to bottom
const baselines = [910, 949, 952, 988, 1007, 1013, 1020, 1031, 1043, 1064, 1089, 1096, 1102, 1113, 1121, 1131, 1138,
    1144, 1177, 1180, 1189, 1202, 1213, 1242, 1260, 1262, 1273, 1277, 1289, 1298, 1306, 1331, 1348, 1365, 1372, 1383,
    1393, 1406, 1412];

function add(parent, tag, attrs, text) {
    const el = document.createElementNS(NS, tag);
    for (const key in attrs) {
        el.setAttribute(key, attrs[key]);
    }
    if (text !== undefined) el.textContent = text;
    parent.appendChild(el);
    return el;
}

function mix(a, b, t) {
    const out = a.map((v, i) => Math.round(v + (b[i] - v) * t));
    return `rgb(${out.join(",")})`;
}

function wobble(i, k) {
    const v = Math.sin(i * 12.9898 + k * 78.233) * 43758.5453;
    return v - Math.floor(v);
}

function sliceColor(y) {
    const t = (y - 910) / (1412 - 910);
    if (t < 0.47) return mix([15, 122, 142], [27, 170, 190], t / 0.47);
    return mix([27, 170, 190], [102, 224, 247], (t - 0.47) / 0.53);
}

function drawBigChart() {
    const svg = document.getElementById("hist-big");

    baselines.forEach((y, i) => {
        add(svg, "rect", { x: 786, y: y - 2, width: 1232, height: 3, fill: "#f4f4f4" });
        add(svg, "rect", { x: 786, y: y - 2, width: 61, height: 3, fill: "#e9e9e9" });
        add(svg, "rect", { x: 1835, y: y - 2, width: 183, height: 3, fill: "#ebebeb" });

        const first = i === 0;
        const h = first ? 367 : 335 + wobble(i, 1) * 14;
        const leftKnee = first ? 16 : 18 + wobble(i, 2) * 6;
        const rightKnee = first ? 3 : 11 + wobble(i, 3) * 7;
        const foot = first ? 0 : 2 + wobble(i, 4) * 4;
        const tail = first ? 1 : 3;
        const rim = [
            [1322, y - foot],
            [1359, y - leftKnee],
            [1393, y - h],
            [1459, y - rightKnee],
            [1494, y - tail],
        ];
        const shape = [
            [first ? 1322 : 1235 + wobble(i, 5) * 30, y],
            [first ? 1322 : 1275, y - (first ? 0 : 1)],
            ...rim,
            [1570, y - (first ? 0 : 1.5)],
            [first ? 1540 : 1590 + wobble(i, 6) * 25, y],
        ];
        add(svg, "polygon", { points: shape.join(" "), fill: sliceColor(y) });
        if (!first) {
            add(svg, "polyline", {
                points: rim.join(" "),
                fill: "none",
                stroke: "#fff",
                "stroke-opacity": 0.55,
                "stroke-width": 1.6,
            });
        }
    });

    // x axis
    for (let i = 0; i <= 28; i++) {
        const x = 786 + i * 44;
        add(svg, "line", { x1: x, y1: 1412, x2: x, y2: 1424, class: "axis-line" });
        if (i % 2 === 0) {
            const v = -1.4 + i * 0.1;
            const label = i === 14 ? "-0.0" : v.toFixed(1);
            add(svg, "text", { x: x, y: 1437, class: "axis-label" }, label);
        }
    }

    // y axis
    for (let i = 0; i < 13; i++) {
        const y = 937 + i * 34;
        add(svg, "line", { x1: 2018, y1: y, x2: 2030, y2: y, class: "axis-line" });
        if (i % 2 === 0) {
            add(svg, "text", { x: 2036, y: y - 2, class: "axis-label axis-label-y" }, String(200 + i * 200));
        }
    }
}

function drawTopAxis(id, start, step, count, labels) {
    const svg = document.getElementById(id);
    for (let i = 0; i < count; i++) {
        const x = start + i * step;
        add(svg, "line", { x1: x, y1: 0, x2: x, y2: 12, class: "axis-line" });
        if (i % 2 === 0) {
            add(svg, "text", { x: x, y: 25, class: "axis-label" }, labels[i / 2]);
        }
    }
}

// the little peaks at the top of the b1_biases charts, cut off by the download shelf
const peaks = [
    { x: 881, top: 1669, w: 10, pale: false },
    { x: 922, top: 1633, w: 11, pale: true },
    { x: 963, top: 1676, w: 9, pale: false },
    { x: 988, top: 1676, w: 9, pale: false },
    { x: 1017, top: 1676, w: 8, pale: false },
    { x: 1139, top: 1667, w: 9, pale: false },
];

function drawSmallChart(id, dark, pale) {
    const svg = document.getElementById(id);
    peaks.forEach((p) => {
        const g = add(svg, "g", { opacity: p.pale ? 0.3 : 1 });
        for (let k = 0; k < 5; k++) {
            const top = p.top + k * 9;
            const w = p.w * (1.1 - k * 0.13);
            const pts = [[p.x - w, 1714], [p.x, top], [p.x + w, 1714]];
            add(g, "polygon", {
                points: pts.join(" "),
                fill: mix(dark, pale, k % 2 ? 0.9 : k * 0.1),
                stroke: "#fff",
                "stroke-opacity": 0.6,
            });
        }
    });

    // the wide lump
    for (let k = 0; k < 6; k++) {
        const d = k * 8;
        const pts = [[1034, 1714], [1047, 1668 + d], [1064, 1680 + d], [1083, 1700 + d * 0.6], [1088, 1714]];
        add(svg, "polygon", {
            points: pts.join(" "),
            fill: mix(dark, pale, k / 5),
            stroke: "#fff",
            "stroke-opacity": 0.6,
        });
    }
}

drawBigChart();
drawTopAxis("axis-1", 48, 43.2, 11, ["0.0", "0.2", "0.4", "0.6", "0.8", "1.0"]);
drawTopAxis("axis-2", 48, 43.2, 11, ["0.0", "0.2", "0.4", "0.6", "0.8", "1.0"]);
drawTopAxis("axis-3", 48, 30.85, 15, ["-1.4", "-1.0", "-0.6", "-0.2", "0.2", "0.6", "1.0", "1.4"]);
drawSmallChart("hist-test", [197, 66, 31], [250, 190, 170]);
drawSmallChart("hist-train", [18, 127, 146], [170, 225, 235]);
```
